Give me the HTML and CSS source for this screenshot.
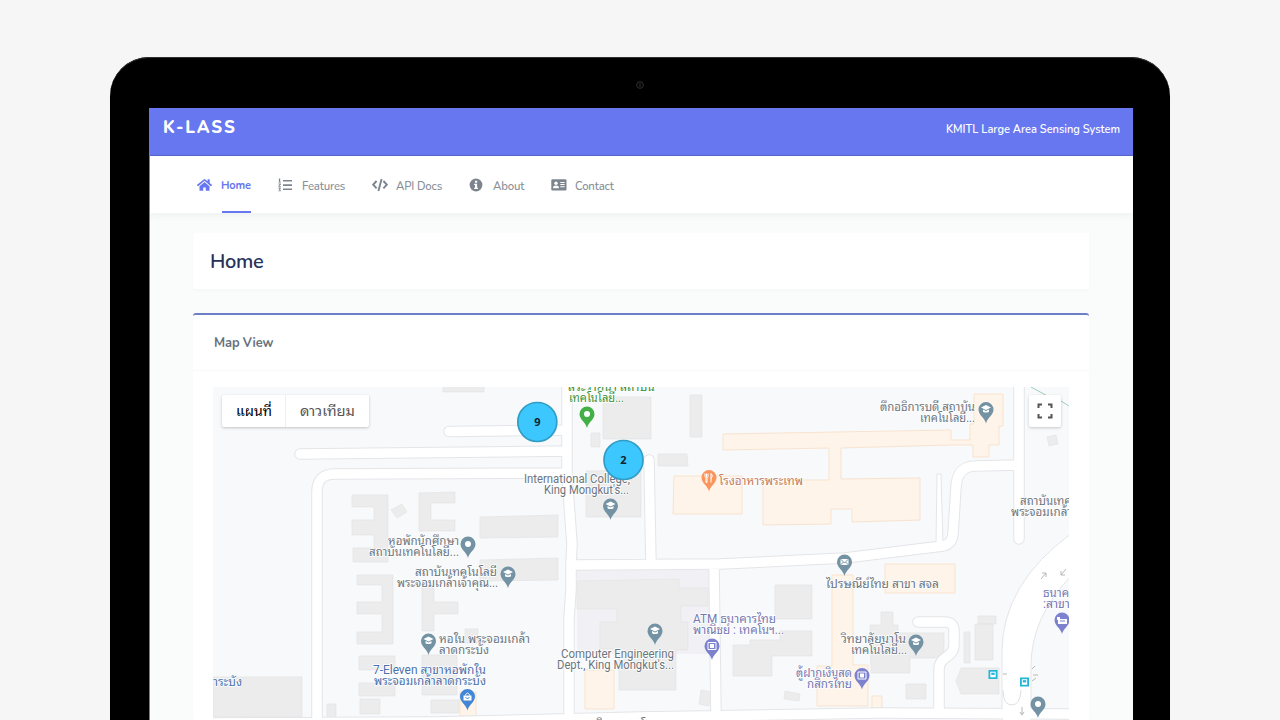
FILE: index.html
```html
<!DOCTYPE html>
<html lang="th">
<head>
<meta charset="utf-8">
<title>K-LASS</title>
<link rel="stylesheet" href="styles.css">
</head>
<body>
<div class="device">
  <svg class="camera" viewBox="0 0 8 8"><circle cx="4" cy="4" r="3.3"/><path d="M4 2v4"/></svg>
  <div class="screen">
    <header class="topbar"><svg class="brand" viewBox="0 0 74 20"><text x="0" y="15" textLength="72" lengthAdjust="spacing">K-LASS</text></svg><svg class="tagline" viewBox="0 0 175 20"><text x="0" y="14" textLength="174" lengthAdjust="spacingAndGlyphs">KMITL Large Area Sensing System</text></svg></header>
    <nav class="nav">
      <a class="item home active"><svg class="icon" viewBox="0 0 576 512"><path d="M280 148 96 300v164c0 9 7 16 16 16h112c9 0 16-7 16-16v-96c0-9 7-16 16-16h64c9 0 16 7 16 16v96c0 9 7 16 16 16h112c9 0 16-7 16-16V300L296 148c-5-4-11-4-16 0zM572 251l-84-69V44c0-7-5-12-12-12h-56c-7 0-12 5-12 12v72l-90-74c-17-14-43-14-60 0L4 251c-5 4-6 12-2 17l26 31c4 5 12 6 17 2L280 107c5-4 11-4 16 0l235 194c5 4 13 3 17-2l26-31c4-5 3-13-2-17z"/></svg><span>Home</span></a>
      <a class="item features"><svg class="icon" viewBox="0 0 14 14"><path d="M5 2h9v1.6H5zM5 6.3h9v1.6H5zM5 10.5h9v1.6H5zM1 .6h1.2v3.2h.7v.8H.5v-.8H1V1.6H.5zM.5 5.4h2.3v1.4L1.500 8h1.300v.8H.4v-.9l1.400-1.500H.5zM.5 9.600h2.200v1l-.7.6.7.7v1.400H.4v-.8h1.400v-.6l-.8-.2v-.7l.5-.6h-1z"/></svg><span>Features</span></a>
      <a class="item api"><svg class="icon" viewBox="0 0 16 14"><path d="M4.600 3 1.200 6.700l3.400 3.700M11.400 3l3.400 3.700-3.400 3.700M9.600.9 6.400 13" fill="none" stroke="currentColor" stroke-width="1.900"/></svg><span>API Docs</span></a>
      <a class="item about"><svg class="icon" viewBox="0 0 14 14"><circle cx="7" cy="7" r="6.400"/><path class="cut" d="M6 2.800h2.200v2H6zM5.100 5.800h3v4h.9v1.300H5.100V9.800H6V7.100h-.9z"/></svg><span>About</span></a>
      <a class="item contact"><svg class="icon" viewBox="0 0 16 14"><rect x=".3" y="1.300" width="15.200" height="11.200" rx="1.300"/><g class="cut"><circle cx="5" cy="5.200" r="1.700"/><path d="M2 10.300c0-2 1.100-2.700 3-2.700s3 .7 3 2.700zM9.300 4h4.300v1H9.300zM9.300 6.100h4.300v1H9.300zM9.300 8.200h4.300v1H9.300z"/></g></svg><span>Contact</span></a>
    </nav>
    <main class="content">
      <section class="title-card"><h1>Home</h1></section>
      <section class="map-card">
        <h2>Map View</h2>
        <div class="map-wrap">
          <div class="map">
            <svg class="canvas" viewBox="213 387 856 333">
              <defs>
                <g id="roads">
                  <path d="M449 431.500 567 430M300 454l267-3M317 725V492q0-18 18-18l232-1M567 380v95l5 69-1 21v24l-2 30v110M649 460l2 104M714 565l2 150M572 565l148-1 125-6 98-12q9-2 10-12l3-47q1-21 20-21l42-1M1019 380v159M918 622h27q9 0 9 9v14q0 6-5 10l-5 4q-5 4-5 10v43M200 723l235-1 205-5 240-4 200 1"/>
                </g>
                <path id="drop" d="M0 12C-1.200 6.500-7.500 3.500-7.500-2a7.500 7.500 0 1 1 15 0C7.500 3.500 1.200 6.500 0 12z"/>
                <path id="cap" d="M-5-2 0-4.500 5-2 0 .5zM-3 0 0 1.500 3 0v2.200Q0 4-3 2.200z"/>
                <g id="atm"><path d="M-4-5.500h8v7h-8z" fill="none" stroke="#fff"/><path d="M-2-4h4v4h-4z"/></g>
                <g id="bus"><path d="M0 0h9v9H0z" fill="#22b5d8"/><path d="M1.800 1.700h5.400v5.600H1.800z" fill="#fff"/><path d="M2.800 2.700h3.400v2.200H2.800z" fill="#22b5d8"/></g>
              </defs>
              <rect x="213" y="387" width="856" height="333" fill="#f8f9fb"/>
              <path class="tint" d="M577 570h132v84H577z"/>
              <g class="building">
                <path d="M443 385h41v7h-41zM603 397h48v42h-48zM591 433h9v14h-9zM690 395h12v42h-12zM658 454h29l1 12h-30zM586 471l55-1v47h-55zM352 495h36v67h-35v-14h21v-13h-22v-15h22v-13h-22zM419 493l36-1v11h-24v17h24v11h-36zM391 510l11-6 5 8-10 6zM480 517l78-2v22l-78 1zM480 560l78-2v22l-78 1zM357 575h36v69h-36v-12h25v-18h-25v-12h25v-17h-25zM422 584h12v18h24v12h-24v17h-12zM359 656h36v14h-36zM359 683h36v13h-36zM360 699h20v15h-20zM422 655h35v40h-35zM431 700h28v13h-28zM465 629h13v14h-13zM577 581l102-2v9h29v18h-27v16h7v28h-12v40h-57v-41h-19v-27h17v-13h-40zM775 585h37v34h-37zM733 645h17v-5h30v-9h32v25h-40v20h-39zM701 690l11 2-3 14-10-2zM785 691l15 3-1 7-15-2zM870 625h11v-13h12v13h5v8h46v19l-8 6h-26v15h-39zM906 684h20v15h-20zM975 624h18v36h-18zM978 616h18v8h-18zM964 632h6v31h-6zM961 668h38v26h-38l-5-13zM213 677h89v40h-89zM327 704h9v16h-9zM1047 437l9-2 2 9-9 2z"/>
              </g>
              <path class="food" d="M723 434 951 430v10h19v-16h4v-30h29v32h-4v19h-10v12h-16v-12h-22L841 448v31l79-1v42l-68 2v-13h-21v15l-68 1v-45h66v-32l-106 2zM674 476h68v38h-69zM832 575h21v90h15v41h-51v-40h15zM885 564h70v29h-70zM585 670h29v39h-29zM460 692h16v24h-16zM872 696h10v12h-10z"/>
              <use href="#roads" class="road-edge"/>
              <path d="M1072 533Q1002 584 1002 652v50q0 9 1 25h28V666q0-49 41-91z" fill="#fff" stroke="#e3e5e8"/>
              <path d="M937 474h4l2 70h-7z" fill="#fff" stroke="#e3e5e8"/>
              <use href="#roads" class="road-fill"/>
              <path d="M1003 690q0 15 9 15 8 0 9-15" fill="none" stroke="#dddfe2"/>
              <path d="M1031 387l20 11m10 3 8 5" stroke="#9ccdbb" fill="none"/>
              <path d="M1041 579l5-6m-4 0h4v4M1066 569l-5 6m0-4v4h4M1022 707v8m-2-3 2 3 2-3M1003 674h4M1032 669l3-3M1033 675h5M1032 681l4-3" class="arrow"/>
              <use href="#bus" x="988.500" y="670"/><use href="#bus" x="1020" y="677.500"/>

              <g class="pin green" transform="translate(587 416)"><use href="#drop"/><circle cy="-2" r="3"/></g>
              <g class="pin" transform="translate(610.500 508)"><use href="#drop"/><use href="#cap" y="-2"/></g>
              <g class="pin" transform="translate(468 546)"><use href="#drop"/><circle cy="-2" r="3"/></g>
              <g class="pin" transform="translate(508 576)"><use href="#drop"/><use href="#cap" y="-2"/></g>
              <g class="pin" transform="translate(428.500 643)"><use href="#drop"/><use href="#cap" y="-2"/></g>
              <g class="pin" transform="translate(655 633)"><use href="#drop"/><use href="#cap" y="-2"/></g>
              <g class="pin" transform="translate(986 411.500)"><use href="#drop"/><use href="#cap" y="-2"/></g>
              <g class="pin" transform="translate(916 644)"><use href="#drop"/><use href="#cap" y="-2"/></g>
              <g class="pin" transform="translate(1038 706)"><use href="#drop"/><circle cy="-2" r="3"/></g>
              <g class="pin" transform="translate(844.500 564)"><use href="#drop"/><path d="M-4-5h8v6h-8z"/><path d="M-4-5 0-1l4-4M-4 1l3-3M4 1 1-2" fill="none" stroke="#6f8c9c" stroke-width=".9"/></g>
              <g class="pin orange" transform="translate(709 479.500)"><use href="#drop"/><path d="M-4-6v3q0 1 1 1v5h1v-5q1 0 1-1v-3M-2.500-6v4M2-6v9M2-6q3 2 0 5" fill="none" stroke="#fff"/></g>
              <g class="pin blue" transform="translate(467.500 698.500)"><use href="#drop"/><path d="M-4-3h8v5h-8z"/><path d="M-2-3v-1q2-3 4 0v1" fill="none" stroke="#fff"/><path d="M-2-1q2 2 4 0" fill="none" stroke="#4286d5"/></g>
              <g class="pin violet" transform="translate(712 648)"><use href="#drop"/><use href="#atm"/></g>
              <g class="pin violet" transform="translate(862 677.500)"><use href="#drop"/><use href="#atm"/></g>
              <g class="pin violet" transform="translate(1062 622)"><use href="#drop"/><path d="M-5-5h3v2h7v5h-9v-4h-1z"/><path d="M-2-1h5" stroke="#7d82cf"/></g>

              <g class="label">
                <g class="t-green"><text x="568" y="391" textLength="87" lengthAdjust="spacingAndGlyphs">สระว่ายน้ำ สถาบัน</text><text x="569" y="402" textLength="55" lengthAdjust="spacingAndGlyphs">เทคโนโลยี...</text></g>
                <text x="524" y="483" textLength="106" lengthAdjust="spacingAndGlyphs">International College,</text><text x="544" y="494" textLength="85" lengthAdjust="spacingAndGlyphs">King Mongkut's...</text>
                <text x="388" y="545" textLength="71" lengthAdjust="spacingAndGlyphs">หอพักนักศึกษา</text><text x="369" y="556" textLength="90" lengthAdjust="spacingAndGlyphs">สถาบันเทคโนโลยี...</text>
                <text x="415" y="576" textLength="82" lengthAdjust="spacingAndGlyphs">สถาบันเทคโนโลยี</text><text x="397" y="587" textLength="101" lengthAdjust="spacingAndGlyphs">พระจอมเกล้าเจ้าคุณ...</text>
                <text x="439" y="643" textLength="91" lengthAdjust="spacingAndGlyphs">หอใน พระจอมเกล้า</text><text x="439" y="654" textLength="50" lengthAdjust="spacingAndGlyphs">ลาดกระบัง</text>
                <text x="561" y="658" textLength="113" lengthAdjust="spacingAndGlyphs">Computer Engineering</text><text x="557" y="669" textLength="117" lengthAdjust="spacingAndGlyphs">Dept., King Mongkut's...</text>
                <text x="880" y="411" textLength="95" lengthAdjust="spacingAndGlyphs">ตึกอธิการบดี สถาบัน</text><text x="920" y="422" textLength="55" lengthAdjust="spacingAndGlyphs">เทคโนโลยี...</text>
                <text x="1020" y="505" textLength="56" lengthAdjust="spacingAndGlyphs">สถาบันเทคโ</text><text x="1011" y="516" textLength="61" lengthAdjust="spacingAndGlyphs">พระจอมเกล้า</text>
                <text x="826" y="588" textLength="113" lengthAdjust="spacingAndGlyphs">ไปรษณีย์ไทย สาขา สจล</text>
                <text x="841" y="643" textLength="65" lengthAdjust="spacingAndGlyphs">วิทยาลัยนาโน</text><text x="851" y="654" textLength="56" lengthAdjust="spacingAndGlyphs">เทคโนโลยี...</text>
                <text x="597" y="728" textLength="67" lengthAdjust="spacingAndGlyphs">วิศวกรรมโยธา</text>
                <g class="t-violet"><text x="693" y="623" textLength="83" lengthAdjust="spacingAndGlyphs">ATM ธนาคารไทย</text><text x="693" y="634" textLength="91" lengthAdjust="spacingAndGlyphs">พาณิชย์ : เทคโนฯ...</text><text x="796" y="677" textLength="56" lengthAdjust="spacingAndGlyphs">ตู้ฝากเงินสด</text><text x="807" y="688" textLength="45" lengthAdjust="spacingAndGlyphs">กสิกรไทย</text><text x="1043" y="597" textLength="26" lengthAdjust="spacingAndGlyphs">ธนาค</text><text x="1043" y="608" textLength="27" lengthAdjust="spacingAndGlyphs">:สาขา</text></g>
                <g class="t-blue"><text x="373" y="674" textLength="113" lengthAdjust="spacingAndGlyphs">7-Eleven สาขาหอพักใน</text><text x="374" y="685" textLength="112" lengthAdjust="spacingAndGlyphs">พระจอมเกล้าลาดกระบัง</text><text x="213" y="686" textLength="29" lengthAdjust="spacingAndGlyphs">าระบัง</text></g>
                <text class="t-orange" x="719" y="485" textLength="84" lengthAdjust="spacingAndGlyphs">โรงอาหารพระเทพ</text>
              </g>
              <g class="cluster"><circle cx="537.300" cy="422" r="19.500"/><text x="537.300" y="425.500">9</text><circle cx="623.500" cy="460" r="19.500"/><text x="623.500" y="463.500">2</text></g>
            </svg>
            <div class="map-types"><span class="type selected"><svg viewBox="0 0 36 24"><text x="0" y="17" textLength="36" lengthAdjust="spacingAndGlyphs">แผนที่</text></svg></span><span class="type"><svg viewBox="0 0 55 24"><text x="0" y="17" textLength="55" lengthAdjust="spacingAndGlyphs">ดาวเทียม</text></svg></span></div>
            <span class="fullscreen"><svg viewBox="0 0 16 16"><path d="M1.500 5V1.500H5M11 1.500h3.500V5M14.500 11v3.500H11M5 14.500H1.500V11"/></svg></span>
          </div>
        </div>
      </section>
    </main>
  </div>
</div>
</body>
</html>
```
FILE: styles.css
```css
* { box-sizing: border-box; }
body { margin: 0; height: 720px; overflow: hidden; background: #f6f6f6; font-family: Nunito, Lato, "Noto Sans", sans-serif; display: flow-root; }
.device { position: relative; width: 1060px; height: 663px; margin: 57px auto 0; padding: 51px 37px 0 39px; border-radius: 39px 39px 0 0; background: #000; box-shadow: inset 0 1px 0 #303034; }
.camera { position: absolute; left: 526px; top: 24px; width: 8px; height: 8px; fill: none; stroke: #303030; stroke-width: 1; }
.screen { height: 612px; overflow: hidden; background: #fafcfc; border-left: 1px solid #6777ef; }
.topbar { height: 48px; padding: 10px 12px 0 13px; display: flex; justify-content: space-between; background: #6777ef; border-bottom: 1px solid #5866c8; }
.topbar svg { fill: #fff; overflow: visible; }
.brand { width: 74px; height: 20px; font-size: 17px; font-weight: 800; }
.tagline { width: 175px; height: 20px; margin-top: 1px; font-size: 12.3px; font-weight: 600; }
.nav { display: flex; height: 57px; padding-left: 47px; background: #fff; box-shadow: 0 3px 7px rgba(40, 70, 60, .055); }
.item { display: flex; height: 57px; align-items: center; color: #868e96; font-size: 11.4px; font-weight: 500; }
.icon { flex: none; fill: currentColor; width: 14px; height: 14px; color: #7c858e; }
.cut { fill: #fff; }
.item span { display: flex; align-items: center; height: 57px; padding-top: 2px; white-space: nowrap; letter-spacing: -.15px; }
.home { width: 81px; gap: 10px; color: #6777ef; font-weight: 700; }
.home .icon { width: 15px; color: #6777ef; }
.home span { width: 29px; padding-top: 4px; text-indent: -1px; border-bottom: 2px solid #6777ef; font-size: 11px; letter-spacing: -.15px; }
.features { width: 94px; gap: 10px; }
.api { width: 97px; gap: 8px; }
.api .icon, .contact .icon { width: 16px; }
.about { width: 82px; gap: 10px; }
.contact { gap: 8px; }
.content { padding: 20px 44px 0 43px; }
.title-card { height: 56px; padding: 0 17px; display: flex; align-items: center; background: #fff; border-radius: 3px; box-shadow: 0 2px 4px rgba(0, 0, 0, .025); }
h1, h2 { margin: 0; }
h1 { color: #28315a; font-size: 20px; font-weight: 600; letter-spacing: -.3px; }
.map-card { height: 407px; margin-top: 24px; background: #fff; border-top: 2px solid #6d7fc9; border-radius: 3px; }
h2 { display: flex; align-items: center; height: 56px; padding-left: 21px; border-bottom: 1px solid #f8f9f9; color: #67727d; font-size: 12.8px; letter-spacing: -.1px; }
.map-wrap { padding: 16px 20px 0; }
.map { position: relative; height: 333px; }
.canvas { display: block; width: 856px; height: 333px; }
.building { fill: #ececec; stroke: #e4e4e4; stroke-width: .7; }
.tint { fill: #f1f1f5; }
.food { fill: #fff4e9; stroke: #f7e3d0; }
.road-edge { fill: none; stroke: #e3e5e8; stroke-width: 11.5; stroke-linecap: round; stroke-linejoin: round; }
.road-fill { fill: none; stroke: #fff; stroke-width: 9.5; stroke-linecap: round; stroke-linejoin: round; }
.arrow { fill: none; stroke: #b7b8ba; }
.pin use:first-child { fill: #7392a3; }
.pin { fill: #fff; }
.pin.green use:first-child { fill: #43b047; }
.pin.orange use:first-child { fill: #fa965d; }
.pin.blue use:first-child { fill: #4286d5; }
.pin.violet use:first-child { fill: #7d82cf; }
.label { font: 12px Roboto, "Noto Sans Thai Looped", "Noto Looped Thai", Loma, Garuda, Waree, "Noto Sans Thai", sans-serif; fill: #6b757d; stroke: #fff; stroke-width: 1.5px; paint-order: stroke; }
.t-green { fill: #35913a; }
.t-violet { fill: #7477b2; }
.t-blue { fill: #4c70aa; }
.t-orange { fill: #c27a5c; }
.cluster circle { fill: #3cc8ff; stroke: #319dc5; stroke-width: 1.7; }
.cluster text { font: bold 11px "Open Sans", sans-serif; text-anchor: middle; fill: #10242e; }
.map-types { position: absolute; left: 9px; top: 8px; display: flex; height: 32px; background: #fff; border-radius: 2px; box-shadow: 0 1px 3px rgba(0, 0, 0, .22); }
.type { display: flex; align-items: center; padding: 0 14px; font: 14px Roboto, "Noto Sans Thai Looped", "Noto Looped Thai", Loma, Garuda, Waree, "Noto Sans Thai", sans-serif; fill: #565656; }
.type svg { width: 55px; height: 24px; overflow: visible; }
.type.selected { width: 64px; border-right: 1px solid #eee; fill: #000; }
.type.selected svg { width: 36px; }
.fullscreen { position: absolute; right: 8px; top: 8px; display: grid; place-items: center; width: 32px; height: 32px; background: #fff; border-radius: 2px; box-shadow: 0 1px 3px rgba(0, 0, 0, .2); }
.fullscreen svg { width: 16px; fill: none; stroke: #555; stroke-width: 2; }
```
